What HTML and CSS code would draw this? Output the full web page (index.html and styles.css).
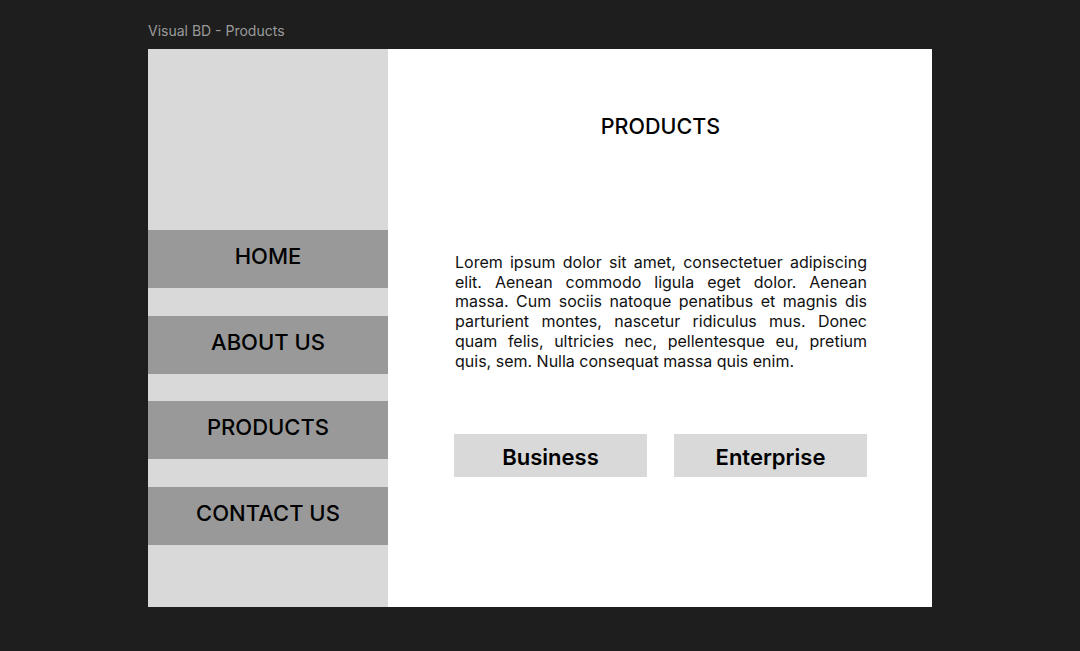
FILE: index.html
```html
<!DOCTYPE html>
<html lang="en">
<head>
    <meta charset="UTF-8">
    <meta name="viewport" content="width=device-width, initial-scale=1.0">
    <title>Visual BD - Products</title>
    <link rel="stylesheet" href="styles.css">
</head>
<body>
    <div class="canvas">
        <div class="frame-label">Visual BD - Products</div>

        <div class="frame">
            <nav class="sidebar">
                <a class="nav-item" href="#">HOME</a>
                <a class="nav-item" href="#">ABOUT US</a>
                <a class="nav-item" href="#">PRODUCTS</a>
                <a class="nav-item" href="#">CONTACT US</a>
            </nav>

            <main class="content">
                <h1 class="title">PRODUCTS</h1>

                <p class="intro">
                    Lorem ipsum dolor sit amet, consectetuer adipiscing elit. Aenean commodo ligula eget dolor. Aenean massa. Cum sociis natoque penatibus et magnis dis parturient montes, nascetur ridiculus mus. Donec quam felis, ultricies nec, pellentesque eu, pretium quis, sem. Nulla consequat massa quis enim.
                </p>

                <div class="options">
                    <button class="option">Business</button>
                    <button class="option">Enterprise</button>
                </div>
            </main>
        </div>
    </div>
</body>
</html>
```

FILE: styles.css
```css
:root {
    --bg-dark: #1e1e1e;
    --label-gray: #9a9a9a;
    --panel-light: #d9d9d9;
    --nav-gray: #999999;
    --text-black: #000000;
}

body {
    font-family: 'Inter', 'Noto Sans', sans-serif;
    background-color: var(--bg-dark);
    margin: 0;
    padding: 0;
}

.canvas {
    padding: 22px 0 0 148px;
}

.frame-label {
    color: var(--label-gray);
    font-size: 14px;
    line-height: 18px;
    height: 18px;
    margin-bottom: 9px;
}

.frame {
    display: flex;
    width: 784px;
    height: 558px;
    background-color: #ffffff;
}

.sidebar {
    width: 240px;
    flex-shrink: 0;
    background-color: var(--panel-light);
    display: flex;
    flex-direction: column;
    gap: 27.67px;
    padding-top: 181px;
    box-sizing: border-box;
}

.nav-item {
    display: flex;
    align-items: center;
    justify-content: center;
    height: 58px;
    background-color: var(--nav-gray);
    color: var(--text-black);
    font-size: 22px;
    font-weight: 500;
    text-decoration: none;
    padding-bottom: 6px;
    box-sizing: border-box;
}

.content {
    flex: 1;
    padding: 64px 65px 0 66px;
}

.title {
    margin: 0;
    text-align: center;
    font-size: 21.5px;
    font-weight: 500;
    line-height: 26px;
    color: var(--text-black);
}

.intro {
    margin: 114px 0 0 1px;
    font-size: 16px;
    line-height: 19.7px;
    text-align: justify;
    color: #111111;
}

.options {
    display: grid;
    grid-template-columns: 1fr 1fr;
    gap: 27px;
    margin-top: 63px;
}

.option {
    height: 43px;
    border: none;
    background-color: var(--panel-light);
    color: var(--text-black);
    font-family: inherit;
    font-size: 22px;
    font-weight: 600;
    padding: 2px 0 0;
    cursor: pointer;
}
```
